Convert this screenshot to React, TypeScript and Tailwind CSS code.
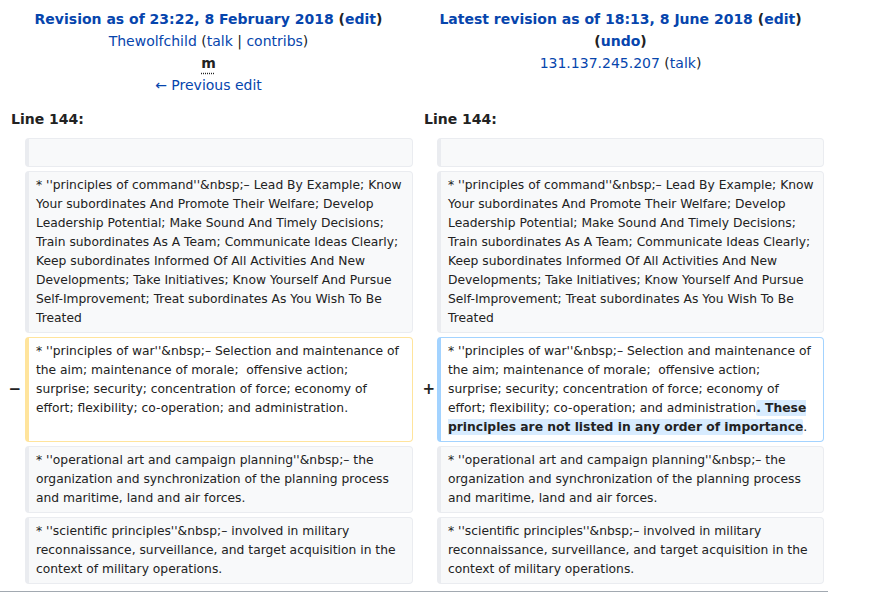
import React from 'react'

const link = 'text-[#0645ad]'

function Box({ kind = 'context', children }: { kind?: 'context' | 'deleted' | 'added'; children?: React.ReactNode }) {
  const tone =
    kind === 'deleted'
      ? 'bg-white border-[#ffe49c]'
      : kind === 'added'
        ? 'bg-white border-[#a3d3ff]'
        : 'bg-[#f8f9fa] border-[#eaecf0]'
  return (
    <div
      className={`border border-l-4 rounded-[4px] px-[7px] py-[4px] text-[12.3px] leading-[19px] text-[#222] whitespace-pre overflow-hidden ${tone}`}
    >
      {children ?? '\u00a0'}
    </div>
  )
}

function Marker({ sign, className = '' }: { sign?: string; className?: string }) {
  return (
    <div className={`flex items-center justify-end text-[15px] font-bold text-[#222] ${className}`}>
      {sign}
    </div>
  )
}

// lines are kept as the page wrapped them
const context = [
  [
    "* ''principles of command''&nbsp;– Lead By Example; Know",
    'Your subordinates And Promote Their Welfare; Develop',
    'Leadership Potential; Make Sound And Timely Decisions;',
    'Train subordinates As A Team; Communicate Ideas Clearly;',
    'Keep subordinates Informed Of All Activities And New',
    'Developments; Take Initiatives; Know Yourself And Pursue',
    'Self-Improvement; Treat subordinates As You Wish To Be',
    'Treated',
  ].join('\n'),
]

const after = [
  [
    "* ''operational art and campaign planning''&nbsp;– the",
    'organization and synchronization of the planning process',
    'and maritime, land and air forces.',
  ].join('\n'),
  [
    "* ''scientific principles''&nbsp;– involved in military",
    'reconnaissance, surveillance, and target acquisition in the',
    'context of military operations.',
  ].join('\n'),
]

const warText = [
  "* ''principles of war''&nbsp;– Selection and maintenance of",
  'the aim; maintenance of morale;  offensive action;',
  'surprise; security; concentration of force; economy of',
  'effort; flexibility; co-operation; and administration',
].join('\n')

export default function App() {
  return (
    <div className="w-[874px] h-[607px] bg-white font-['DejaVu_Sans',sans-serif] text-[#222]">
      <div className="w-[828px] px-1 pt-1 grid grid-cols-[17px_388px_16px_387px] gap-1">
        {/* revision headers */}
        <div className="col-span-2 pt-1 pb-2 text-center text-[14px] leading-[22px]">
          <div className="font-bold">
            <span className={link}>Revision as of 23:22, 8 February 2018</span> (<span className={link}>edit</span>)
          </div>
          <div>
            <span className={link}>Thewolfchild</span> (<span className={link}>talk</span> | <span className={link}>contribs</span>)
          </div>
          <div>
            <span className="font-bold underline decoration-dotted underline-offset-[5px]">m</span>
          </div>
          <div className={link}>← Previous edit</div>
        </div>
        <div className="col-span-2 pt-1 pb-2 text-center text-[14px] leading-[22px]">
          <div className="font-bold">
            <span className={link}>Latest revision as of 18:13, 8 June 2018</span> (<span className={link}>edit</span>)
          </div>
          <div className="font-bold">
            (<span className={link}>undo</span>)
          </div>
          <div>
            <span className={link}>131.137.245.207</span> (<span className={link}>talk</span>)
          </div>
        </div>

        {/* line numbers */}
        <div className="col-span-2 pl-[7px] pb-1 text-[14px] leading-[22px] font-bold">Line 144:</div>
        <div className="col-span-2 pl-[7px] pb-1 text-[14px] leading-[22px] font-bold">Line 144:</div>

        <Marker />
        <Box />
        <Marker />
        <Box />

        {context.map((t, i) => (
          <React.Fragment key={i}>
            <Marker />
            <Box>{t}</Box>
            <Marker />
            <Box>{t}</Box>
          </React.Fragment>
        ))}

        <Marker sign="−" />
        <Box kind="deleted">{warText}.</Box>
        <Marker sign="+" className="-mr-[2px]" />
        <Box kind="added">
          {warText}
          <span className="bg-[#d8ecff] font-bold rounded-[2px] py-[1px]">
            {'. These\nprinciples are not listed in any order of importance'}
          </span>
          .
        </Box>

        {after.map((t, i) => (
          <React.Fragment key={i}>
            <Marker />
            <Box>{t}</Box>
            <Marker />
            <Box>{t}</Box>
          </React.Fragment>
        ))}
      </div>
      <div className="w-[828px] mt-[7px] h-px bg-[#a2a9b1]" />
    </div>
  )
}
